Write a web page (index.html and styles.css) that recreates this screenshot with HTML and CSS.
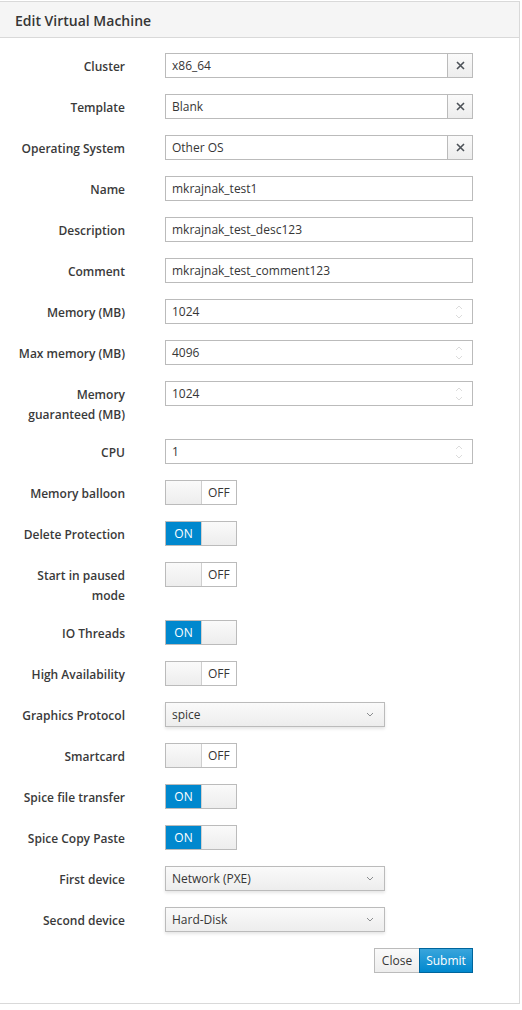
FILE: index.html
```html
<!DOCTYPE html>
<html>
<head>
<meta charset="utf-8">
<link rel="stylesheet" href="styles.css">
</head>
<body>
<div class="panel">
  <div class="panel-heading"><h3 class="title">Edit Virtual Machine</h3></div>
  <div class="panel-body">
    <div class="row"><div class="lbl">Cluster</div><div class="ctl"><div class="group"><div class="field">x86_64</div><div class="clear"><svg width="9" height="9" viewBox="0 0 9 9"><path d="M1 1L8 8M8 1L1 8" stroke="#4d5258" stroke-width="1.6"/></svg></div></div></div></div>
    <div class="row"><div class="lbl">Template</div><div class="ctl"><div class="group"><div class="field">Blank</div><div class="clear"><svg width="9" height="9" viewBox="0 0 9 9"><path d="M1 1L8 8M8 1L1 8" stroke="#4d5258" stroke-width="1.6"/></svg></div></div></div></div>
    <div class="row"><div class="lbl">Operating System</div><div class="ctl"><div class="group"><div class="field">Other OS</div><div class="clear"><svg width="9" height="9" viewBox="0 0 9 9"><path d="M1 1L8 8M8 1L1 8" stroke="#4d5258" stroke-width="1.6"/></svg></div></div></div></div>
    <div class="row"><div class="lbl">Name</div><div class="ctl"><div class="field">mkrajnak_test1</div></div></div>
    <div class="row"><div class="lbl">Description</div><div class="ctl"><div class="field">mkrajnak_test_desc123</div></div></div>
    <div class="row"><div class="lbl">Comment</div><div class="ctl"><div class="field">mkrajnak_test_comment123</div></div></div>
    <div class="row"><div class="lbl">Memory (MB)</div><div class="ctl"><div class="field num"><span class="val">1024</span><svg class="spin" width="8" height="16" viewBox="0 0 8 16"><path d="M1 5L4 2L7 5M1 11L4 14L7 11" fill="none" stroke="#dcdcdc" stroke-width="1"/></svg></div></div></div>
    <div class="row"><div class="lbl">Max memory (MB)</div><div class="ctl"><div class="field num"><span class="val">4096</span><svg class="spin" width="8" height="16" viewBox="0 0 8 16"><path d="M1 5L4 2L7 5M1 11L4 14L7 11" fill="none" stroke="#dcdcdc" stroke-width="1"/></svg></div></div></div>
    <div class="row"><div class="lbl">Memory guaranteed (MB)</div><div class="ctl"><div class="field num"><span class="val">1024</span><svg class="spin" width="8" height="16" viewBox="0 0 8 16"><path d="M1 5L4 2L7 5M1 11L4 14L7 11" fill="none" stroke="#dcdcdc" stroke-width="1"/></svg></div></div></div>
    <div class="row"><div class="lbl">CPU</div><div class="ctl"><div class="field num"><span class="val">1</span><svg class="spin" width="8" height="16" viewBox="0 0 8 16"><path d="M1 5L4 2L7 5M1 11L4 14L7 11" fill="none" stroke="#dcdcdc" stroke-width="1"/></svg></div></div></div>
    <div class="row"><div class="lbl">Memory balloon</div><div class="ctl"><div class="toggle off"><span class="handle"></span><span class="state">OFF</span></div></div></div>
    <div class="row"><div class="lbl">Delete Protection</div><div class="ctl"><div class="toggle on"><span class="state">ON</span><span class="handle"></span></div></div></div>
    <div class="row"><div class="lbl">Start in paused mode</div><div class="ctl"><div class="toggle off"><span class="handle"></span><span class="state">OFF</span></div></div></div>
    <div class="row"><div class="lbl">IO Threads</div><div class="ctl"><div class="toggle on"><span class="state">ON</span><span class="handle"></span></div></div></div>
    <div class="row"><div class="lbl">High Availability</div><div class="ctl"><div class="toggle off"><span class="handle"></span><span class="state">OFF</span></div></div></div>
    <div class="row"><div class="lbl">Graphics Protocol</div><div class="ctl"><div class="select"><span class="val">spice</span><svg width="8" height="5" viewBox="0 0 8 5"><path d="M1 1L4 4L7 1" fill="none" stroke="#8b8d8f" stroke-width="1"/></svg></div></div></div>
    <div class="row"><div class="lbl">Smartcard</div><div class="ctl"><div class="toggle off"><span class="handle"></span><span class="state">OFF</span></div></div></div>
    <div class="row"><div class="lbl">Spice file transfer</div><div class="ctl"><div class="toggle on"><span class="state">ON</span><span class="handle"></span></div></div></div>
    <div class="row"><div class="lbl">Spice Copy Paste</div><div class="ctl"><div class="toggle on"><span class="state">ON</span><span class="handle"></span></div></div></div>
    <div class="row"><div class="lbl">First device</div><div class="ctl"><div class="select"><span class="val">Network (PXE)</span><svg width="8" height="5" viewBox="0 0 8 5"><path d="M1 1L4 4L7 1" fill="none" stroke="#8b8d8f" stroke-width="1"/></svg></div></div></div>
    <div class="row"><div class="lbl">Second device</div><div class="ctl"><div class="select"><span class="val">Hard-Disk</span><svg width="8" height="5" viewBox="0 0 8 5"><path d="M1 1L4 4L7 1" fill="none" stroke="#8b8d8f" stroke-width="1"/></svg></div></div></div>
    <div class="actions"><button class="btn btn-default">Close</button><button class="btn btn-primary">Submit</button></div>
  </div>
</div>
</body>
</html>
```

FILE: styles.css
```css
html, body {
  margin: 0;
  padding: 0;
  background: #fff;
}
body {
  font-family: "Open Sans", "Liberation Sans", sans-serif;
  font-size: 12px;
  color: #363636;
}
.panel {
  margin-top: 1px;
  width: 519px;
  border-top: 1px solid #d9d9d9;
  border-right: 1px solid #d9d9d9;
  border-bottom: 1px solid #d9d9d9;
}
.panel-heading {
  height: 35px;
  background: #f5f5f5;
  border-bottom: 1px solid #d9d9d9;
  display: flex;
  align-items: center;
  padding-left: 15px;
}
.title {
  margin: 0;
  padding-top: 1px;
  font-size: 14px;
  font-weight: 600;
  color: #363636;
}
.panel-body {
  padding: 15px 0 30px 0;
}
.row {
  display: grid;
  grid-template-columns: 110px 308px;
  column-gap: 40px;
  padding-left: 15px;
  margin-bottom: 16px;
  align-items: start;
}
.lbl {
  text-align: right;
  padding-top: 4px;
  margin-bottom: -2px;
  line-height: 20px;
  font-weight: 600;
  color: #3a3a3a;
}
.group {
  display: flex;
}
.field {
  box-sizing: border-box;
  height: 25px;
  border: 1px solid #bbb;
  background: #fff;
  padding: 0 6px;
  line-height: 24px;
  flex: 1;
}
.num {
  display: flex;
  align-items: center;
  padding-right: 9px;
}
.num .val {
  flex: 1;
}
.clear {
  box-sizing: border-box;
  width: 26px;
  height: 25px;
  margin-left: -1px;
  border: 1px solid #bbb;
  background: linear-gradient(#fafafa, #ededed);
  display: flex;
  align-items: center;
  justify-content: center;
}
.toggle {
  box-sizing: border-box;
  width: 72px;
  height: 25px;
  border: 1px solid #bbb;
  display: flex;
  line-height: 23px;
}
.toggle .handle, .toggle .state {
  width: 35px;
  text-align: center;
}
.toggle.off .handle {
  background: linear-gradient(#fafafa, #ededed);
  border-right: 1px solid #cfcfcf;
}
.toggle.off .state {
  background: #fff;
  color: #363636;
}
.toggle.on .state {
  background: #0088ce;
  color: #fff;
}
.toggle.on .handle {
  background: linear-gradient(#fafafa, #ededed);
  border-left: 1px solid #cfcfcf;
  width: 34px;
}
.select {
  box-sizing: border-box;
  width: 220px;
  height: 25px;
  border: 1px solid #bbb;
  background: linear-gradient(#fafafa, #ededed);
  box-shadow: 0 2px 3px rgba(3, 3, 3, 0.1);
  display: flex;
  align-items: center;
  padding: 0 10px 0 6px;
  line-height: 23px;
}
.select .val {
  flex: 1;
}
.actions {
  display: flex;
  justify-content: flex-end;
  width: 473px;
}
.btn {
  box-sizing: border-box;
  height: 25px;
  font-family: "Open Sans", "Liberation Sans", sans-serif;
  font-size: 12px;
  line-height: 24px;
  padding: 0 6px;
  border: 1px solid #bbb;
  margin: 0;
}
.btn-default {
  background: linear-gradient(#fafafa, #ededed);
  color: #363636;
  width: 46px;
}
.btn-primary {
  background: linear-gradient(#39a5dc, #0088ce);
  border-color: #00659c;
  color: #fff;
  width: 54px;
  margin-left: -1px;
}
```
